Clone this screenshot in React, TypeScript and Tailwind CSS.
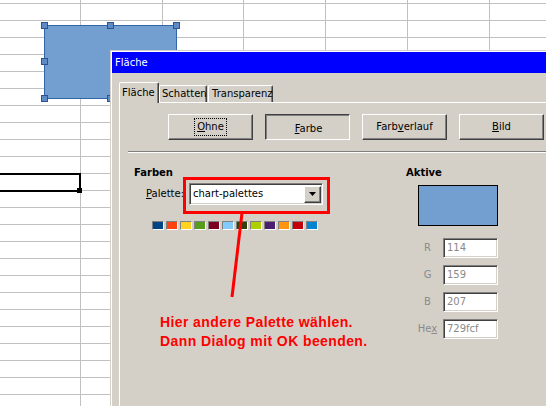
import React from "react";

// ─── Data ────────────────────────────────────────────────────────────────────

const COLS = 7;
const ROWS = 25;

const SWATCHES = [
  "#004586",
  "#ff420e",
  "#ffd320",
  "#579d1c",
  "#7e0021",
  "#83caff",
  "#314004",
  "#aecf00",
  "#4b1f6f",
  "#ff950e",
  "#c5000b",
  "#0084d1",
];

const HANDLES = [
  "left-[41px] top-[22px]",
  "left-[107px] top-[22px]",
  "left-[173px] top-[22px]",
  "left-[41px] top-[58px]",
  "left-[41px] top-[95px]",
  "left-[107px] top-[95px]",
];

const RGB = [
  { label: "R", value: "114" },
  { label: "G", value: "159" },
  { label: "B", value: "207" },
];

// ─── Bits ────────────────────────────────────────────────────────────────────

const raised =
  "border border-t-white border-l-white border-r-[#404040] border-b-[#404040] shadow-[inset_-1px_-1px_0_#808080]";
const sunken =
  "border border-t-[#808080] border-l-[#808080] border-r-white border-b-white shadow-[inset_1px_1px_0_#404040,inset_-1px_-1px_0_#d4d0c8]";

function Tab({ label, active, className }: { label: string; active?: boolean; className: string }) {
  return (
    <div
      className={`${className} flex items-start rounded-t-[2px] border-t border-l border-r border-t-white border-l-white border-r-[#404040] bg-[#d4d0c8] shadow-[inset_-1px_0_0_#808080] ${
        active ? "relative z-10 -mb-px h-[21px] pl-[2px] pt-[4px]" : "h-[17px] pl-[2px] pt-[2px]"
      }`}
    >
      {label}
    </div>
  );
}

function Button({ children, pressed }: { children: React.ReactNode; pressed?: boolean }) {
  return (
    <div
      className={`flex h-[26px] w-[85px] items-center justify-center ${
        pressed ? "border border-t-[#404040] border-l-[#404040] border-r-white border-b-white shadow-[inset_1px_1px_0_#808080] pt-[3px] pl-[2px]" : raised
      }`}
    >
      {children}
    </div>
  );
}

// ─── App ─────────────────────────────────────────────────────────────────────

export default function App() {
  return (
    <div className="relative h-[406px] w-[546px] overflow-hidden bg-white font-['DejaVu_Sans',sans-serif] text-[10px] leading-[12px] text-black">

      {/* ── Spreadsheet grid ─────────────────────────────────────────────── */}
      <div className="-mt-[13px] grid grid-cols-[81px_82px_81px_82px_82px_82px_82px]">
        {Array.from({ length: COLS * ROWS }).map((_, i) => (
          <div key={i} className="h-[17px] border-r border-b border-[#c0c0c0]" />
        ))}
      </div>

      {/* Selected cell */}
      <div className="absolute left-[-2px] top-[173px] h-[19px] w-[83px] border-2 border-black" />
      <div className="absolute left-[77px] top-[188px] h-[5px] w-[5px] bg-black" />

      {/* Chart shape */}
      <div className="absolute left-[44px] top-[25px] h-[74px] w-[133px] border border-[#3465a4] bg-[#729fcf]" />
      {HANDLES.map((pos) => (
        <div key={pos} className={`absolute ${pos} h-[7px] w-[7px] border border-[#2c5590] bg-[#5f8ac4]`} />
      ))}

      {/* ── Dialog ───────────────────────────────────────────────────────── */}
      <div className="absolute left-[110px] top-[50px] h-[360px] w-[440px] border-t border-l border-[#d4d0c8] bg-[#d4d0c8]">
        <div className="h-full border-t border-l border-white">

          <div className="flex h-[21px] items-center bg-[#0000ff] pl-[3px] text-[10px] text-white">
            Fläche
          </div>

          <div className="pl-[7px] pt-[9px]">
            {/* Tabs */}
            <div className="flex h-[20px] items-end">
              <Tab label="Fläche" active className="w-[40px]" />
              <Tab label="Schatten" className="w-[48px]" />
              <Tab label="Transparenz" className="ml-px w-[65px] pl-[3px]" />
            </div>

            {/* Panel */}
            <div className="h-[320px] border-t border-l border-white">
              <div className="mt-[11px] flex gap-[12px] pl-[48px]">
                <Button>
                  <span className="outline-1 outline-dotted outline-black px-[2px] py-[2px]">
                    <span className="underline">O</span>hne
                  </span>
                </Button>
                <Button pressed>
                  <span>
                    <span className="underline">F</span>arbe
                  </span>
                </Button>
                <Button>
                  <span>
                    Farb<span className="underline">v</span>erlauf
                  </span>
                </Button>
                <Button>
                  <span>
                    <span className="underline">B</span>ild
                  </span>
                </Button>
              </div>

              <div className="ml-[8px] mt-[11px] h-[2px] border-t border-b border-t-[#808080] border-b-white" />

              <div className="flex">
                {/* Farben */}
                <div className="ml-[14px] w-[272px]">
                  <div className="mt-[14px] font-bold">Farben</div>
                  <div className="ml-[12px] mt-[4px] flex items-center">
                    <div className="w-[43px]">
                      <span className="underline">P</span>alette:
                    </div>
                    <div className={`flex h-[22px] w-[134px] items-center bg-white pl-[3px] ${sunken}`}>
                      <span className="flex-1">chart-palettes</span>
                      <div className={`mr-[1px] flex h-[17px] w-[17px] items-center justify-center bg-[#d4d0c8] ${raised}`}>
                        <svg width="7" height="4" viewBox="0 0 7 4">
                          <path d="M0 0h7L3.5 4z" fill="#000" />
                        </svg>
                      </div>
                    </div>
                  </div>
                  <div className="ml-[18px] mt-[16px] flex gap-[2px]">
                    {SWATCHES.map((c) => (
                      <div
                        key={c}
                        className="h-[9px] w-[12px] border border-t-[#808080] border-l-[#808080] border-r-white border-b-white"
                        style={{ backgroundColor: c }}
                      />
                    ))}
                  </div>
                </div>

                {/* Aktive */}
                <div>
                  <div className="mt-[14px] font-bold">Aktive</div>
                  <div className="ml-[12px] mt-[6px] h-[41px] w-[80px] border border-black bg-[#729fcf]" />
                  <div className="mt-[12px] flex flex-col gap-[7px]">
                    {RGB.map((r) => (
                      <div key={r.label} className="ml-[6px] flex items-center">
                        <div className="w-[31px] text-center text-[#8a8a8a]">{r.label}</div>
                        <div className={`flex h-[20px] w-[55px] items-center bg-white pl-[3px] text-[#8a8a8a] ${sunken}`}>
                          {r.value}
                        </div>
                      </div>
                    ))}
                    <div className="ml-[6px] flex items-center">
                      <div className="w-[31px] text-center text-[#8a8a8a]">
                        He<span className="underline">x</span>
                      </div>
                      <div className={`flex h-[20px] w-[55px] items-center bg-white pl-[3px] text-[#8a8a8a] ${sunken}`}>
                        729fcf
                      </div>
                    </div>
                  </div>
                </div>
              </div>
            </div>
          </div>
        </div>
      </div>

      {/* ── Annotation ───────────────────────────────────────────────────── */}
      <div className="absolute left-[183px] top-[177px] h-[37px] w-[147px] border-[3px] border-[#ff0000]" />
      <svg className="absolute left-0 top-0" width="546" height="406">
        <line x1="242" y1="213" x2="232" y2="297" stroke="#ff0000" strokeWidth="3" />
      </svg>
      <div className="absolute left-[160px] top-[313px] font-['Liberation_Sans',Arial,sans-serif] text-[14px] font-bold leading-[19px] tracking-[0.4px] text-[#ff0000]">
        Hier andere Palette wählen.
        <br />
        Dann Dialog mit OK beenden.
      </div>
    </div>
  );
}
